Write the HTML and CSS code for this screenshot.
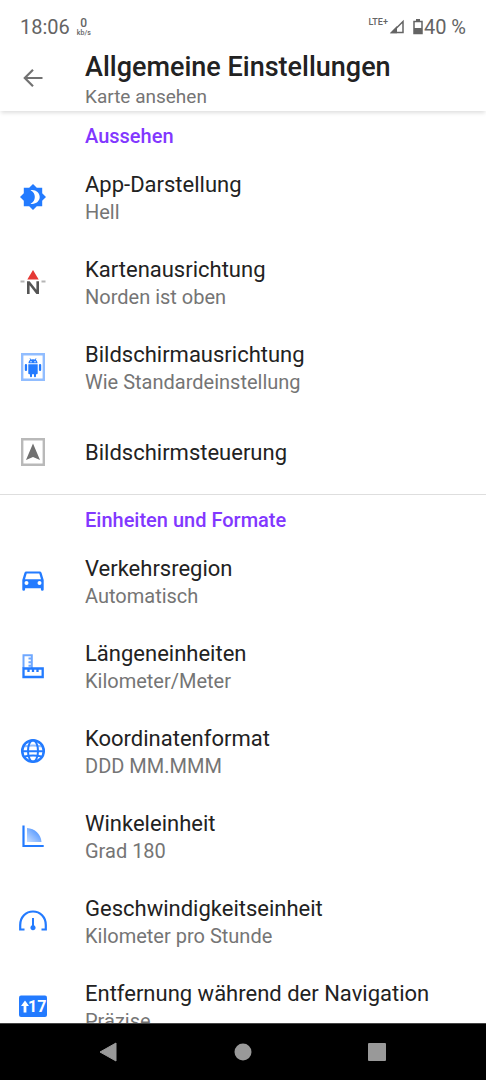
FILE: index.html
```html
<!DOCTYPE html>
<html lang="de">
<head>
<meta charset="utf-8">
<meta name="viewport" content="width=device-width, initial-scale=1">
<title>Allgemeine Einstellungen</title>
<link rel="stylesheet" href="styles.css">
</head>
<body>
<div class="status">
  <span class="clock">18:06</span>
  <span class="speed"><b>0</b><small>kb/s</small></span>
  <span class="network">LTE+</span>
  <svg class="signal" width="16" height="16" viewBox="0 0 16 16"><path d="M14 2.500V13.500H3z" fill="none" stroke="#646464" stroke-width="1.500"/><path d="M0.800 14.300L8 7V14.300z" fill="#646464"/></svg>
  <svg class="battery" width="10" height="16" viewBox="0 0 10 16"><path d="M3 0h4v2H3z" fill="#646464"/><path d="M1 2.500h8v12H1z" fill="none" stroke="#646464" stroke-width="1.500"/><path d="M1 9h8v6H1z" fill="#646464"/></svg>
  <span class="percent">40 %</span>
</div>
<header class="appbar">
  <button class="back" type="button" aria-label="Zurück">
    <svg width="20" height="18" viewBox="0 0 20 18" fill="none" stroke="#727272" stroke-width="2.200"><path d="M19.500 9H2M10 .800L1.800 9l8.200 8.200"/></svg>
  </button>
  <div class="heading">
    <h1>Allgemeine Einstellungen</h1>
    <p>Karte ansehen</p>
  </div>
</header>
<main class="list">
  <section class="group">
    <h2>Aussehen</h2>
    <button class="row" type="button">
      <svg class="icon" viewBox="0 0 28 28"><path d="M14 1l3.800 3.800H23.200V10.200L27 14l-3.800 3.800v5.400h-5.400L14 27l-3.800-3.800H4.800v-5.400L1 14l3.800-3.800V4.800h5.400z" fill="#237bff"/><path d="M11.500 7.300c4.800-1 9.200 2.300 9.200 6.700s-4.400 7.700-9.200 6.700c5.800-2.300 5.800-11.100 0-13.400z" fill="#fff"/></svg>
      <span class="text"><span class="title">App-Darstellung</span><span class="value">Hell</span></span>
    </button>
    <button class="row" type="button">
      <svg class="icon" viewBox="0 0 28 28"><path d="M14 2L19.700 11.500H8.300z" fill="#e53935"/><path d="M1.500 13.500h4M22.500 13.500h4" stroke="#b5b5b5" stroke-width="2"/><path d="M8 26V13.200h2.600l6.800 8.600v-8.600H20V26h-2.600l-6.800-8.700V26z" fill="#555"/></svg>
      <span class="text"><span class="title">Kartenausrichtung</span><span class="value">Norden ist oben</span></span>
    </button>
    <button class="row" type="button">
      <svg class="icon" viewBox="0 0 28 28"><path d="M3.200 1.200h21.600v25.600H3.200z" fill="none" stroke="#91bdff" stroke-width="2.400"/><g fill="#237bff"><path d="M9.500 10.300c0-1.700.7-2.800 1.800-3.500l-.8-1.300.7-.3.900 1.300q1.900-.6 3.800 0l.9-1.300.7.300-.8 1.300c1.100.7 1.800 1.800 1.800 3.500z"/><rect x="5.800" y="11" width="2.300" height="7" rx="1.100"/><rect x="19.900" y="11" width="2.300" height="7" rx="1.100"/><path d="M9.300 11.200h9.400v9a1 1 0 0 1-1 1h-.7v2q0 1-1 1t-1-1v-2h-2v2q0 1-1 1t-1-1v-2h-.7a1 1 0 0 1-1-1z"/></g><circle cx="12" cy="8.700" r=".7" fill="#fff"/><circle cx="16" cy="8.700" r=".7" fill="#fff"/></svg>
      <span class="text"><span class="title">Bildschirmausrichtung</span><span class="value">Wie Standardeinstellung</span></span>
    </button>
    <button class="row row-single" type="button">
      <svg class="icon" viewBox="0 0 28 28"><path d="M3.200 1.200h21.600v25.600H3.200z" fill="none" stroke="#b9b9b9" stroke-width="2.400"/><path d="M14 5.500l7 16.500-7-3-7 3z" fill="#707070"/></svg>
      <span class="text"><span class="title">Bildschirmsteuerung</span></span>
    </button>
  </section>
  <section class="group">
    <h2>Einheiten und Formate</h2>
    <button class="row" type="button">
      <svg class="icon" viewBox="0 0 28 28"><path fill="#237bff" fill-rule="evenodd" d="M7.300 4.500h13.400q1.400 0 1.900 1.400L24.700 13v9.500q0 1.200-1.400 1.200t-1.400-1.200v-1.300H6.100v1.300q0 1.200-1.400 1.200t-1.400-1.200V13l2.100-7.100q.5-1.400 1.900-1.400zM7.700 6.500L6 12.200h16l-1.700-5.700zM7.500 14a2 2 0 1 0 0 4 2 2 0 0 0 0-4zM20.500 14a2 2 0 1 0 0 4 2 2 0 0 0 0-4z"/></svg>
      <span class="text"><span class="title">Verkehrsregion</span><span class="value">Automatisch</span></span>
    </button>
    <button class="row" type="button">
      <svg class="icon" viewBox="0 0 28 28" fill="none"><path d="M4.500 16V3.300h8.300V16M13 6.500H9.500M13 10.200H9.500M13 13.700H9.500" stroke="#6fa8ff" stroke-width="2"/><path d="M4.500 16.500h19.200v8.500H4.500zM9.500 16v4M14 16v4M18.500 16v4" stroke="#237bff" stroke-width="2.300"/></svg>
      <span class="text"><span class="title">Längeneinheiten</span><span class="value">Kilometer/Meter</span></span>
    </button>
    <button class="row" type="button">
      <svg class="icon" viewBox="0 0 28 28" fill="none" stroke="#237bff" stroke-width="2"><path d="M5 9.500q9-2 18 0" stroke="#91bdff"/><circle cx="14" cy="14" r="10.800" stroke-width="2.500"/><ellipse cx="14" cy="14" rx="5" ry="10.800"/><path d="M3.200 14.200h21.600M5.500 19.500q8.500-2 17 0"/></svg>
      <span class="text"><span class="title">Koordinatenformat</span><span class="value">DDD MM.MMM</span></span>
    </button>
    <button class="row" type="button">
      <svg class="icon" viewBox="0 0 28 28"><defs><linearGradient id="angle" x1="1" y1="0" x2="0" y2="1"><stop offset="0" stop-color="#3384ff"/><stop offset="1" stop-color="#c9deff"/></linearGradient></defs><path d="M8 6c8 .500 13.800 6 14.500 14H8z" fill="url(#angle)"/><path d="M4.500 3.500V24h20.200" fill="none" stroke="#237bff" stroke-width="2.200"/></svg>
      <span class="text"><span class="title">Winkeleinheit</span><span class="value">Grad 180</span></span>
    </button>
    <button class="row" type="button">
      <svg class="icon" viewBox="0 0 28 28"><path d="M5.500 22.500H1.200V18C1.200 10 6.900 4.500 14 4.500S26.800 10 26.800 18v4.500h-4.300" fill="none" stroke="#237bff" stroke-width="2.200"/><path d="M13 11h2v7.200a2.600 2.600 0 1 1-2 0z" fill="#237bff"/></svg>
      <span class="text"><span class="title">Geschwindigkeitseinheit</span><span class="value">Kilometer pro Stunde</span></span>
    </button>
    <button class="row" type="button">
      <svg class="icon" viewBox="0 0 28 28"><rect y="3.500" width="28" height="21.500" rx="2" fill="#237bff"/><path d="M6 8.500l4 5.500H7.400v6.500H4.600V14H2z" fill="#fff"/><text class="badge-number" x="9" y="20">17</text></svg>
      <span class="text"><span class="title">Entfernung während der Navigation</span><span class="value">Präzise</span></span>
    </button>
  </section>
</main>
<nav class="navbar" aria-label="System">
  <button type="button" aria-label="Zurück"><svg width="20" height="20" viewBox="0 0 20 20"><path d="M17 1L1 10 17 19z" fill="#999" stroke="#999" stroke-linejoin="round"/></svg></button>
  <button type="button" aria-label="Startseite"><svg width="20" height="20" viewBox="0 0 20 20"><circle cx="10" cy="10" r="8.500" fill="#999"/></svg></button>
  <button type="button" aria-label="Übersicht"><svg width="20" height="20" viewBox="0 0 20 20"><rect x="1" y="1" width="18" height="18" rx="1" fill="#999"/></svg></button>
</nav>
</body>
</html>
```
FILE: styles.css
```css
* { box-sizing: border-box; }
body {
  margin: 0;
  height: 100vh;
  display: flex;
  flex-direction: column;
  background: #fff;
  color: #222;
  font-family: Roboto, "Liberation Sans", sans-serif;
}
h1, h2, p { margin: 0; }
button {
  border: 0;
  padding: 0;
  background: none;
  color: inherit;
  font: inherit;
}
svg { display: block; flex: none; }

.status {
  flex: none;
  display: flex;
  align-items: center;
  height: 48px;
  padding: 6px 20px 0;
  color: #646464;
  font-size: 20px;
  line-height: 24px;
}
.speed {
  display: flex;
  flex-direction: column;
  align-items: center;
  margin-left: 7px;
}
.speed b { font-size: 12px; line-height: 11px; font-weight: 500; }
.speed small { font-size: 7px; line-height: 8px; font-weight: 500; }
.network {
  margin-left: auto;
  padding-bottom: 10px;
  font-size: 9px;
  line-height: 10px;
  font-weight: 500;
}
.signal { margin-left: 1px; }
.battery { margin: 0 1px 0 8px; }

.appbar {
  flex: none;
  display: flex;
  height: 63px;
  position: relative;
  background: #fff;
  box-shadow: 0 3px 4px -1px rgba(0, 0, 0, .13);
}
.back {
  flex: none;
  display: flex;
  align-items: center;
  width: 85px;
  height: 60px;
  padding-left: 23px;
}
.heading { padding-top: 3px; }
.heading h1 { font-size: 27px; line-height: 32px; font-weight: 500; }
.heading p { color: #757575; font-size: 19px; line-height: 28px; }

.list { flex: 1; min-height: 0; overflow: hidden; }
.group + .group { border-top: 1px solid #dedede; }
.group h2 {
  height: 45px;
  padding: 13px 0 0 85px;
  color: #8237ff;
  font-size: 20px;
  line-height: 24px;
  font-weight: 500;
}
.row {
  display: flex;
  align-items: center;
  width: 100%;
  padding: 15px 16px 16px 19px;
  text-align: left;
}
.row-single { min-height: 83px; padding: 14px 16px 14px 19px; }
.icon { width: 28px; height: 28px; margin: 0 38px 2px 0; }
.text { display: flex; flex-direction: column; }
.title { font-size: 22px; line-height: 28px; }
.value { color: #757575; font-size: 20px; line-height: 26px; }
.badge-number { fill: #fff; font-size: 16px; font-weight: 700; }

.navbar {
  flex: none;
  display: flex;
  justify-content: center;
  gap: 114px;
  height: 57px;
  border-top: 1px solid #444;
  background: #000;
}
```
